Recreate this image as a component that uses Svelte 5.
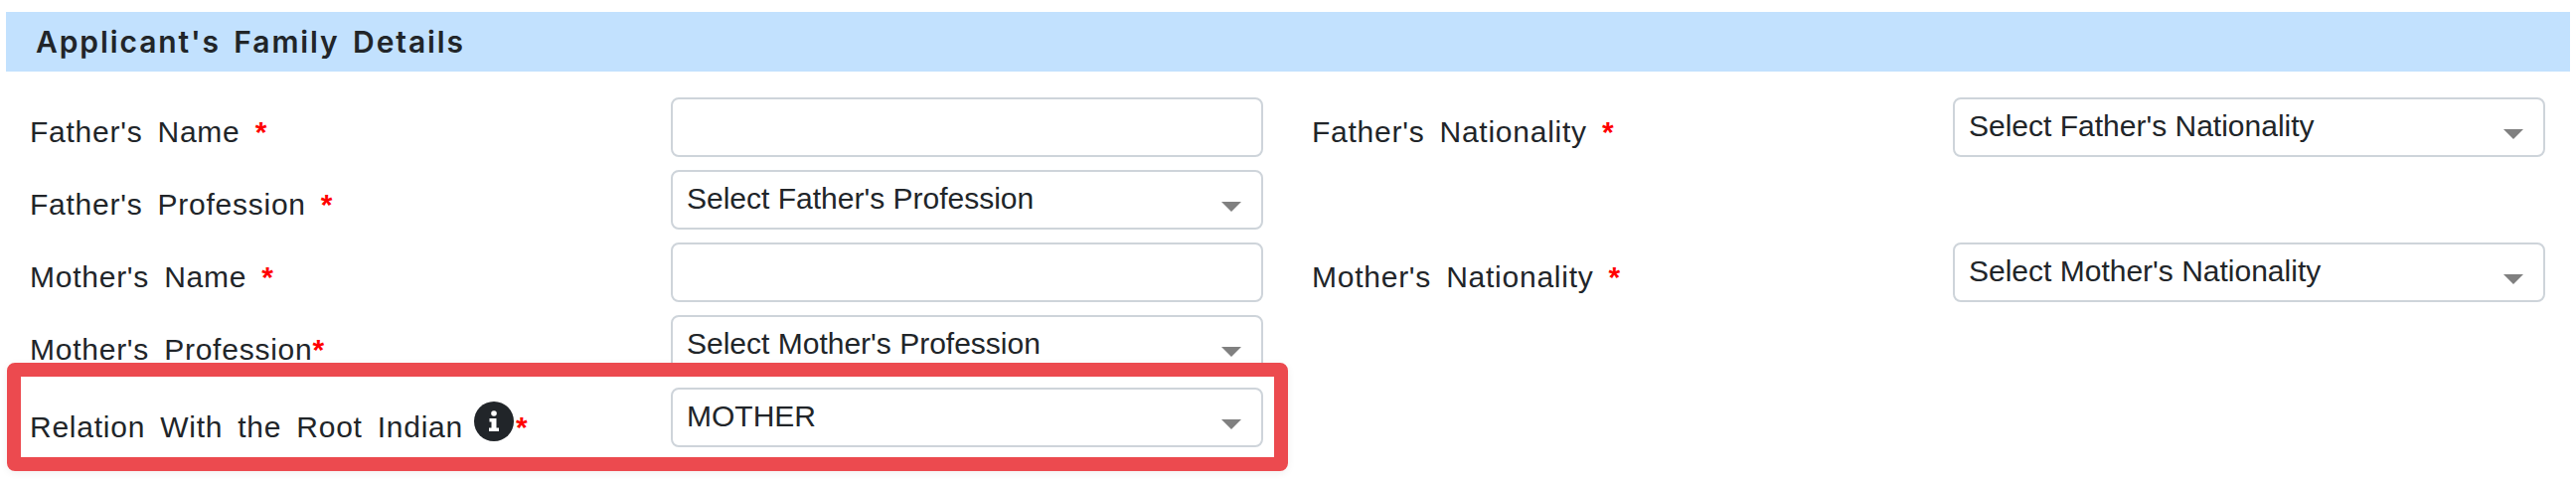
<script>
  // Only the two nationality fields sit in the right column.
  const rows = [
    [
      { label: "Father's Name", kind: 'input', gap: true },
      { label: "Father's Nationality", kind: 'select', value: "Select Father's Nationality", gap: true },
    ],
    [{ label: "Father's Profession", kind: 'select', value: "Select Father's Profession", gap: true }],
    [
      { label: "Mother's Name", kind: 'input', gap: true },
      { label: "Mother's Nationality", kind: 'select', value: "Select Mother's Nationality", gap: true },
    ],
    [{ label: "Mother's Profession", kind: 'select', value: "Select Mother's Profession", gap: false }],
  ];
</script>

<div class="page">
  <h2 class="band">Applicant's Family Details</h2>

  <div class="form">
    {#each rows as row}
      {#each row as field}
        <div class="field">
          <label class="lbl" for={field.label}>
            {field.label}{#if field.gap}&nbsp;{/if}<span class="req">*</span>
          </label>
          {#if field.kind === 'input'}
            <input id={field.label} class="ctl" type="text" />
          {:else}
            <div class="sel">
              <select id={field.label} class="ctl">
                <option>{field.value}</option>
              </select>
              <span class="caret"></span>
            </div>
          {/if}
        </div>
      {/each}
      {#if row.length === 1}<div></div>{/if}
    {/each}

    <div class="field marked">
      <label class="lbl low" for="relation">
        Relation With the Root Indian
        <svg class="info" viewBox="0 0 40 40" aria-hidden="true">
          <circle cx="20" cy="20" r="20" fill="#212529" />
          <circle cx="20" cy="12" r="2.8" fill="#fff" />
          <path d="M15.5 17h7v9.5H25V30H15v-3.5h2.5v-6h-2z" fill="#fff" />
        </svg><span class="req">*</span>
      </label>
      <div class="sel">
        <select id="relation" class="ctl">
          <option>MOTHER</option>
        </select>
        <span class="caret"></span>
      </div>
      <div class="highlight"></div>
    </div>
  </div>
</div>

<style>
  :global(body) {
    margin: 0;
    background: #fff;
  }
  .page {
    width: 2592px;
    height: 486px;
    overflow: hidden;
    padding-top: 12px;
    box-sizing: border-box;
    color: #212529;
    font-family: "Liberation Sans", Arial, sans-serif;
  }
  .band {
    margin: 0 6px;
    height: 60px;
    padding-left: 30px;
    display: flex;
    align-items: center;
    background: #c2e1fe;
    font-family: Inter, sans-serif;
    font-size: 30px;
    font-weight: 600;
    letter-spacing: 1.9px;
    word-spacing: 4px;
  }
  .form {
    display: grid;
    grid-template-columns: 1241px 1241px;
    column-gap: 49px;
    grid-auto-rows: 60px;
    row-gap: 13px;
    padding: 26px 0 0 30px;
  }
  .field {
    position: relative;
    display: grid;
    grid-template-columns: 645px 596px;
  }
  .lbl {
    display: block;
    align-self: center;
    padding-top: 10px;
    font-size: 30px;
    letter-spacing: 0.75px;
    word-spacing: 6px;
    white-space: nowrap;
  }
  .req {
    color: #f00;
    font-weight: 700;
    letter-spacing: 0;
  }
  .info {
    width: 40px;
    height: 40px;
    vertical-align: -4px;
    margin-left: -4px;
    margin-right: 2px;
  }
  .sel {
    position: relative;
  }
  .ctl {
    display: block;
    width: 100%;
    height: 60px;
    box-sizing: border-box;
    border: 2px solid #ced4da;
    border-radius: 8px;
    background: #fff;
    color: #212529;
    font-family: "Liberation Sans", Arial, sans-serif;
    font-size: 30px;
    outline: none;
  }
  select.ctl {
    appearance: none;
    padding: 0 60px 3px 14px;
  }
  .caret {
    position: absolute;
    top: 32px;
    right: 22px;
    border-left: 10px solid transparent;
    border-right: 10px solid transparent;
    border-top: 10px solid #808080;
  }
  .highlight {
    position: absolute;
    inset: -25px -25px -24px -23px;
    border: 14px solid #ec4a4f;
    border-radius: 8px;
    box-shadow: 0 2px 8px rgba(0, 0, 0, 0.06);
    pointer-events: none;
  }
</style>
